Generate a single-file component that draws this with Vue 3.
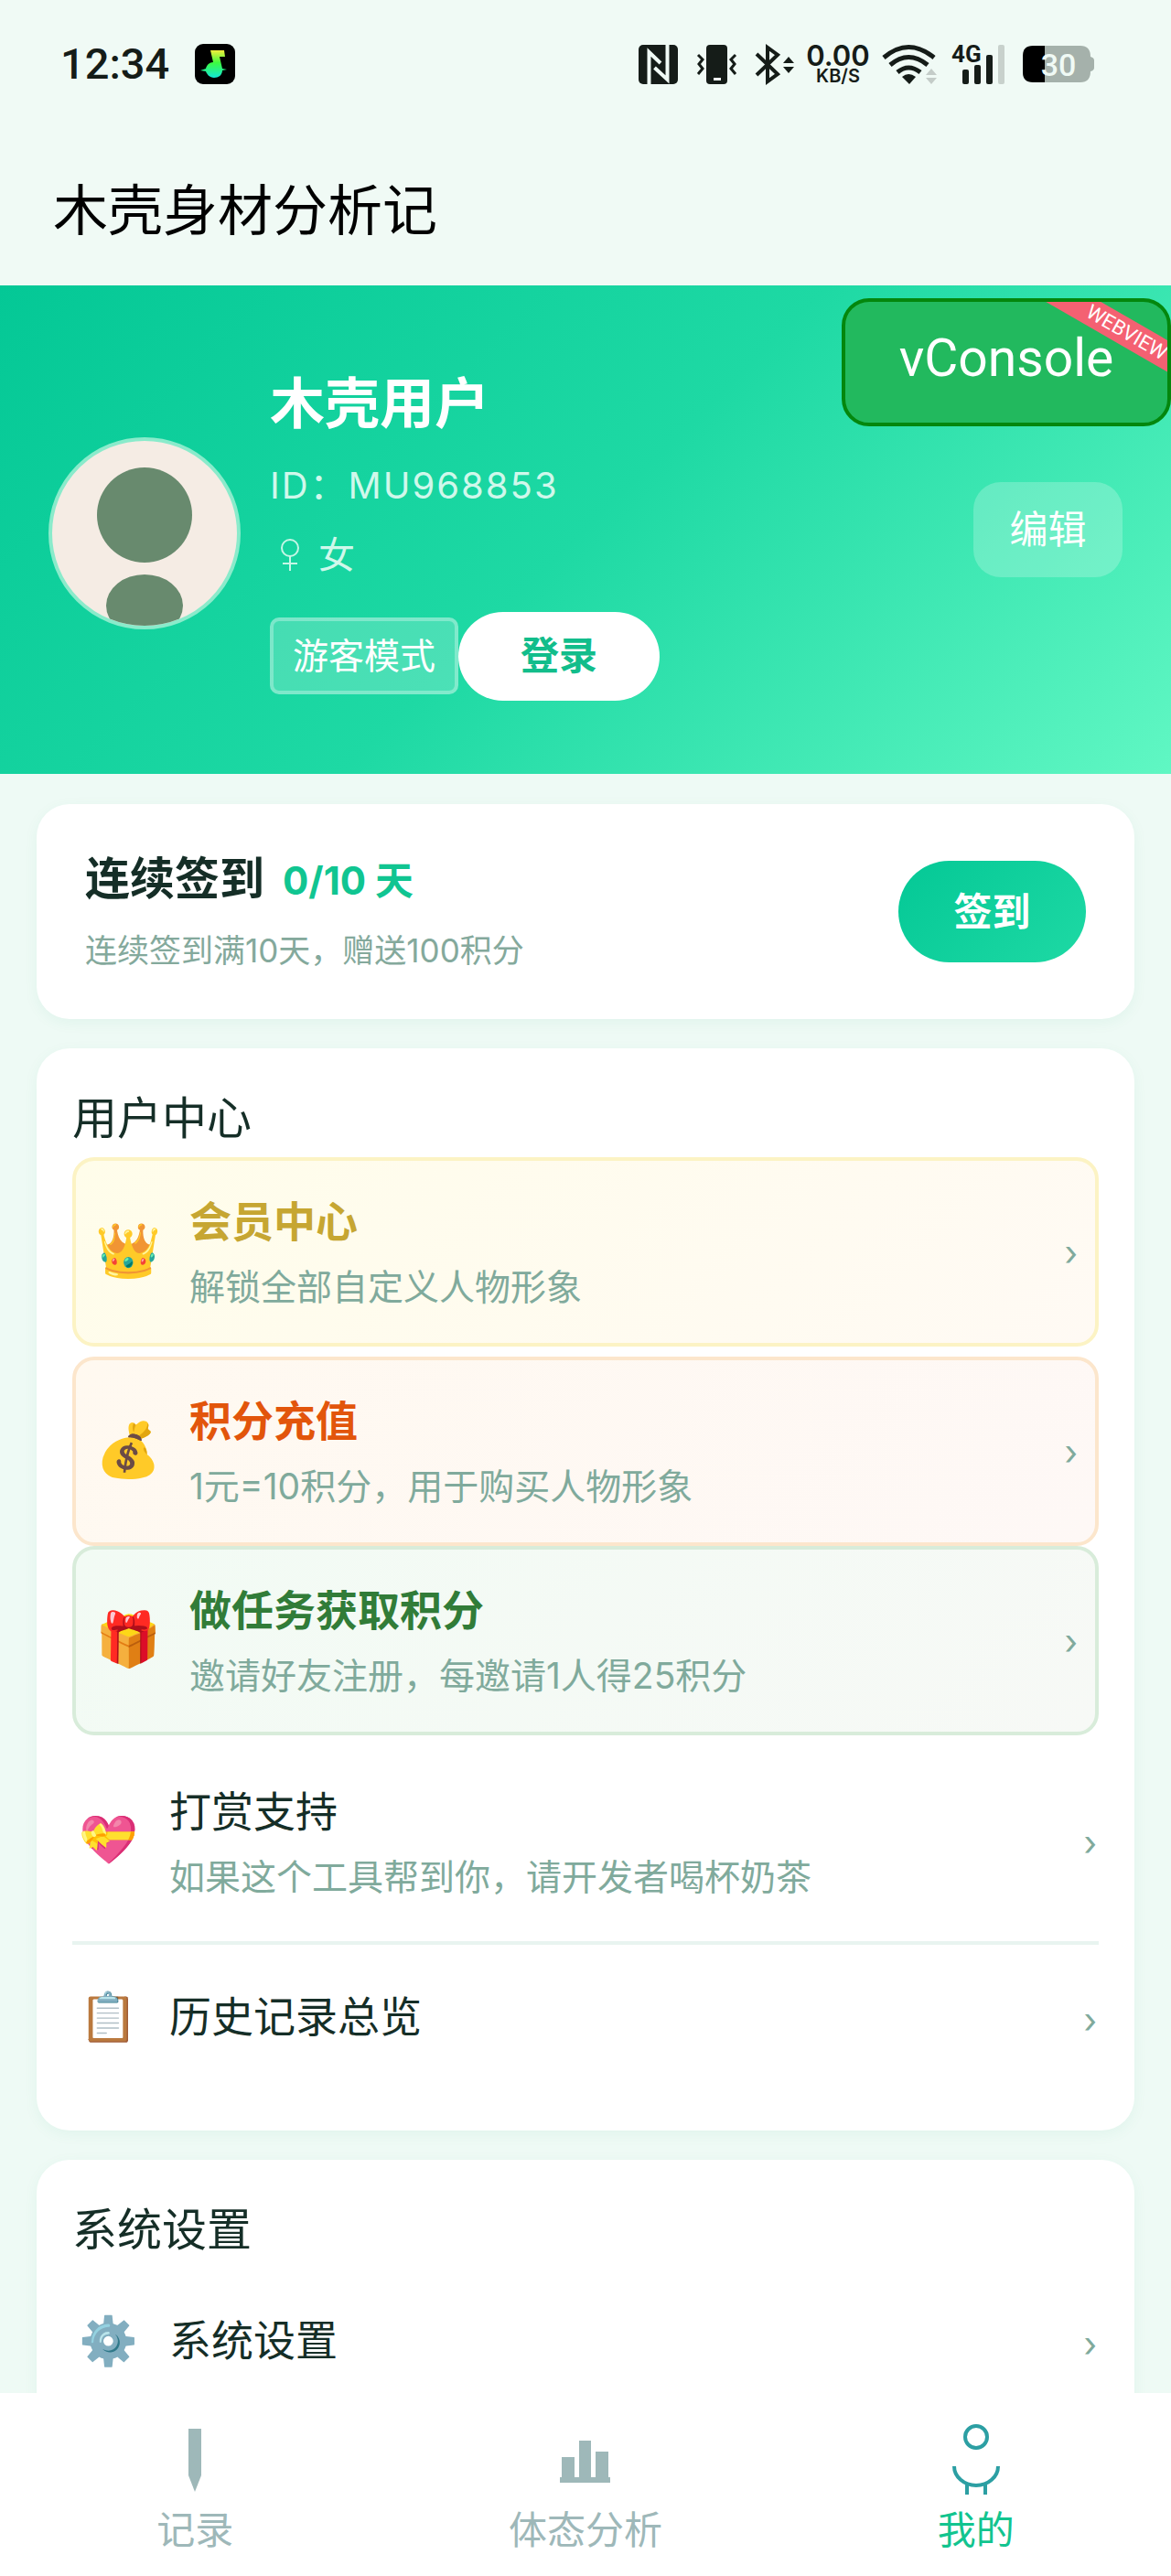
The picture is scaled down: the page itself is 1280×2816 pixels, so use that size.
<script setup>
const perks = [
  { id: 'vip', icon: '👑', title: '会员中心', desc: '解锁全部自定义人物形象' },
  { id: 'recharge', icon: '💰', title: '积分充值', desc: '1元=10积分，用于购买人物形象' },
  { id: 'task', icon: '🎁', title: '做任务获取积分', desc: '邀请好友注册，每邀请1人得25积分' },
]
const links = [
  { id: 'reward', icon: '💝', title: '打赏支持', desc: '如果这个工具帮到你，请开发者喝杯奶茶' },
  { id: 'history', icon: '📋', title: '历史记录总览' },
]
</script>

<template>
  <div class="page">
    <div class="status">
      <span class="time">12:34</span>
      <svg class="music" width="44" height="44" viewBox="0 0 44 44">
        <defs>
          <linearGradient id="note" x1="0" y1="0" x2="0" y2="1">
            <stop offset="0" stop-color="#f4ee3a" />
            <stop offset="0.45" stop-color="#3dfb3f" />
            <stop offset="1" stop-color="#12e8d8" />
          </linearGradient>
        </defs>
        <rect width="44" height="44" rx="9" />
        <path fill="url(#note)" d="M17 7h15l1 7h-6l3 13 5 1-5 1c0 5-4 8-9 8s-8-4-9-7l-6-1 6-2c1-4 4-7 8-7z" />
      </svg>
      <svg class="sys" width="172" height="48" viewBox="697 46 172 48" fill="#151c18">
        <rect x="698" y="49" width="43" height="43" rx="5" />
        <path d="M709.500 92V57L722 69M715.500 74L729.500 87V49" fill="none" stroke="#f0faf5" stroke-width="4" />
        <rect x="772" y="49" width="23" height="43" rx="4" />
        <rect x="780" y="85" width="8" height="3" fill="#f0faf5" />
        <path d="M763 60l5 5-4 5 4 5-5 6M804 60l-5 5 4 5-4 5 5 6" fill="none" stroke="#151c18" stroke-width="3" />
        <path d="M827 59l23 22-11 8V52l11 8-23 22" fill="none" stroke="#151c18" stroke-width="4" />
        <path d="M856 69l6-7 6 7zM856 73l6 7 6-7z" />
      </svg>
      <span class="rate"><span class="speed">0.00</span><span class="unit">KB/S</span></span>
      <svg width="62" height="48" viewBox="963 46 62 48" fill="#151c18">
        <path d="M966 63Q993 40 1021 63M973 71Q993 54 1014 71M981 79Q993 69 1006 79" fill="none" stroke="#151c18" stroke-width="5" />
        <path d="M986 84q7-6 15 0l-7 8z" />
        <path d="M1012 82l6-7 6 7zM1012 85l6 7 6-7z" fill="#c4ccc8" />
      </svg>
      <span class="cell">
        <svg width="46" height="48" viewBox="1052 46 46 48" fill="#151c18">
          <rect x="1052" y="76" width="7" height="16" rx="2" />
          <rect x="1065" y="71" width="7" height="21" rx="2" />
          <rect x="1078" y="60" width="7" height="32" rx="2" />
          <rect x="1091" y="49" width="7" height="43" rx="2" fill="#c8d1cc" />
        </svg>
        <span class="net">4G</span>
      </span>
      <span class="battery">
        <svg width="78" height="40" viewBox="1118 52 78 40">
          <path d="M1130 52h51q11 0 11 12 4 1 4 4v8q0 3-4 4 0 12-11 12h-51z" fill="#a5b1ab" />
          <path d="M1142 52v40h-13q-11 0-11-11V63q0-11 11-11z" fill="#000" />
        </svg>
        <span class="level">30</span>
      </span>
    </div>

    <header class="titlebar"><h1>木壳身材分析记</h1></header>

    <section class="hero">
      <svg class="avatar" width="210" height="210" viewBox="0 0 210 210">
        <defs><clipPath id="face"><circle cx="105" cy="105" r="101" /></clipPath></defs>
        <circle cx="105" cy="105" r="103" fill="#f5ece4" stroke="#8aebcb" stroke-width="4" />
        <g clip-path="url(#face)" fill="#688a6e">
          <circle cx="105" cy="85" r="52" />
          <ellipse cx="105" cy="184" rx="42" ry="34" />
        </g>
      </svg>
      <div class="who">
        <div class="name">木壳用户</div>
        <div class="meta">ID：MU968853</div>
        <div class="meta sex"><svg width="22" height="38" viewBox="0 0 22 38" fill="none" stroke="#c5f6e6" stroke-width="2"><circle cx="11" cy="11" r="9" /><path d="M11 20v16M3 28h16" /></svg>女</div>
        <div class="mode">
          <span class="tag">游客模式</span>
          <button class="login" type="button">登录</button>
        </div>
      </div>
      <button class="edit" type="button">编辑</button>
      <button class="console" type="button">vConsole<span class="ribbon">WEBVIEW</span></button>
    </section>

    <main>
      <section class="card checkin">
        <div>
          <h2>连续签到<em>0/10 天</em></h2>
          <p>连续签到满10天，赠送100积分</p>
        </div>
        <button class="sign" type="button">签到</button>
      </section>

      <section class="card">
        <h3>用户中心</h3>
        <a v-for="p in perks" :key="p.id" href="#" class="row perk" :class="p.id">
          <span class="icon">{{ p.icon }}</span>
          <span class="text"><b>{{ p.title }}</b><small>{{ p.desc }}</small></span>
          <span class="arrow">›</span>
        </a>
        <a v-for="l in links" :key="l.id" href="#" class="row" :class="l.id">
          <span class="icon">{{ l.icon }}</span>
          <span class="text"><b>{{ l.title }}</b><small v-if="l.desc">{{ l.desc }}</small></span>
          <span class="arrow">›</span>
        </a>
      </section>

      <section class="card">
        <h3>系统设置</h3>
        <a href="#" class="row">
          <span class="icon">⚙️</span>
          <span class="text"><b>系统设置</b></span>
          <span class="arrow">›</span>
        </a>
      </section>
    </main>

    <nav class="tabs">
      <a href="#">
        <svg width="60" height="80" viewBox="0 0 60 80" fill="#9eb8b9"><path d="M23 5h14v51l-7 18-7-18z" /></svg>
        记录
      </a>
      <a href="#">
        <svg width="60" height="80" viewBox="0 0 60 80" fill="#9eb8b9"><path d="M2 58h2V36h14v22h5V18h13v40h5V30h14v28h2v6H2z" /></svg>
        体态分析
      </a>
      <a href="#" class="on">
        <svg width="60" height="80" viewBox="0 0 60 80" fill="none" stroke="#2c9fa3" stroke-width="4"><circle cx="30" cy="14" r="12" /><path d="M6 46a24 21 0 0 0 48 0M20 65v12M40 65v12" /></svg>
        我的
      </a>
    </nav>
  </div>
</template>

<style>
body { margin: 0; }
</style>

<style scoped>
* { box-sizing: border-box; }
.page {
  height: 100vh;
  display: flex;
  flex-direction: column;
  background: #eefaf5;
  color: #152e27;
  font-family: Inter, "Noto Sans CJK SC", sans-serif;
}
.page > * { flex-shrink: 0; }
h1, h2, h3, p { margin: 0; font-weight: 400; }
a { color: inherit; text-decoration: none; }
button { border: 0; padding: 0; font-family: inherit; line-height: 60px; color: #fff; cursor: pointer; }

.status {
  display: flex;
  align-items: center;
  height: 142px;
  padding: 0 84px 2px 66px;
  background: #f0faf5;
  color: #151c18;
}
.time { font: 500 47px/56px Roboto, sans-serif; }
.music { margin-left: 28px; }
.sys { margin-left: auto; }
.rate { display: flex; flex-direction: column; align-items: center; width: 72px; margin: 0 11px; font-weight: 600; }
.speed { font-size: 31px; line-height: 26px; }
.unit { font-size: 20px; line-height: 18px; }
.cell { position: relative; display: flex; justify-content: flex-end; width: 58px; margin: 0 20px 0 15px; }
.net { position: absolute; left: 0; top: 0; font: 700 26px/26px Roboto, sans-serif; }
.battery { position: relative; display: flex; }
.level { position: absolute; inset: 0; font: 500 34px/42px Roboto, sans-serif; text-align: center; color: #f0faf5; }

.titlebar { height: 170px; padding: 46px 58px; background: #f0faf5; }
.titlebar h1 { font-size: 60px; line-height: 84px; color: #000; }

.hero {
  position: relative;
  display: flex;
  align-items: center;
  height: 534px;
  padding: 8px 53px 0;
  background: linear-gradient(135deg, #04c896 0%, #1ed9a4 50%, #60f7c3 100%);
  color: #fff;
}
.who { flex: 1; margin-left: 32px; padding-bottom: 4px; }
.name { margin-bottom: 12px; font-size: 60px; line-height: 88px; font-weight: 700; }
.meta { margin-bottom: 8px; font-size: 40px; line-height: 68px; letter-spacing: 2px; color: #d0f8eb; }
.sex { display: flex; align-items: center; gap: 20px; padding-left: 11px; }
.mode { display: flex; align-items: center; margin-top: 28px; }
.tag {
  height: 84px;
  padding: 0 21px;
  border: 4px solid rgba(255, 255, 255, 0.3);
  border-radius: 10px;
  background: rgba(255, 255, 255, 0.2);
  font-size: 39px;
  line-height: 76px;
}
.login { width: 220px; height: 97px; border-radius: 49px; background: #fff; color: #12bd8b; font-size: 42px; font-weight: 700; }
.edit { width: 163px; height: 104px; margin-bottom: 8px; border-radius: 30px; background: rgba(255, 255, 255, 0.22); font-size: 42px; }
.console {
  position: absolute;
  top: 14px;
  right: 0;
  width: 360px;
  height: 140px;
  padding-bottom: 8px;
  overflow: hidden;
  border: 4px solid #04870d;
  border-radius: 30px;
  background: #22b95e;
  font: 400 57px/124px Roboto, sans-serif;
}
.ribbon {
  position: absolute;
  top: 20px;
  right: -78px;
  width: 240px;
  padding-right: 6px;
  background: #f46172;
  font-size: 22px;
  line-height: 30px;
  text-align: center;
  transform: rotate(30deg);
}

main {
  flex: 1 1 0;
  min-height: 0;
  overflow-y: auto;
  scrollbar-width: none;
  padding: 33px 40px 0;
}
.card {
  margin-bottom: 32px;
  padding: 39px;
  border-radius: 36px;
  background: #fff;
  box-shadow: 0 4px 16px rgba(0, 150, 100, 0.06);
}
.checkin { display: flex; align-items: center; justify-content: space-between; height: 235px; padding: 0 53px; }
h2 { font-size: 49px; line-height: 72px; font-weight: 700; }
h2 em { margin-left: 20px; font-size: 42px; font-style: normal; color: #10c591; }
.checkin p { margin-top: 10px; font-size: 35px; line-height: 60px; color: #84a99c; }
.sign { width: 205px; height: 111px; border-radius: 56px; background: linear-gradient(135deg, #04c896, #1ed9a4); font-size: 42px; font-weight: 700; }
h3 { margin-bottom: 4px; font-size: 49px; line-height: 76px; }

.row { display: flex; align-items: center; height: 164px; padding-right: 2px; }
.icon { width: 68px; margin: 0 33px 0 5px; padding-bottom: 6px; font-size: 52px; line-height: 60px; text-align: center; }
.text { flex: 1; padding-bottom: 8px; }
.text b { display: block; font-size: 46px; line-height: 68px; font-weight: 400; }
.text small { display: block; margin-top: 4px; font-size: 39px; line-height: 68px; color: #80aa9c; }
.arrow { font-size: 38px; line-height: 60px; color: #80aa9c; }
.perk { height: 207px; padding: 0 19px 0 18px; border: 4px solid; border-radius: 24px; }
.perk .icon { width: 76px; margin: 0 29px 0 1px; font-size: 58px; }
.perk .text, .reward .text { padding: 4px 0 0; }
.perk b { font-weight: 700; }
.vip { margin-bottom: 11px; border-color: #fcf3c4; background: linear-gradient(135deg, #fffdea, #fffaf4); }
.vip b { color: #c6a632; }
.recharge { border-color: #fce6cc; background: linear-gradient(135deg, #fff9f0, #fef8f6); }
.recharge b { color: #e2550b; }
.task { border-color: #d8ecda; background: linear-gradient(135deg, #f2fbf4, #f7f9f6); }
.task b { color: #317c38; }
.reward { height: 229px; padding-top: 8px; border-bottom: 4px solid #e8f4f0; }

.tabs { display: flex; height: 200px; background: #fff; }
.tabs a {
  flex: 1;
  display: flex;
  flex-direction: column;
  align-items: center;
  gap: 4px;
  padding-top: 34px;
  font-size: 42px;
  line-height: 64px;
  color: #9eb8b9;
}
.tabs .on { color: #12c48f; }
</style>
